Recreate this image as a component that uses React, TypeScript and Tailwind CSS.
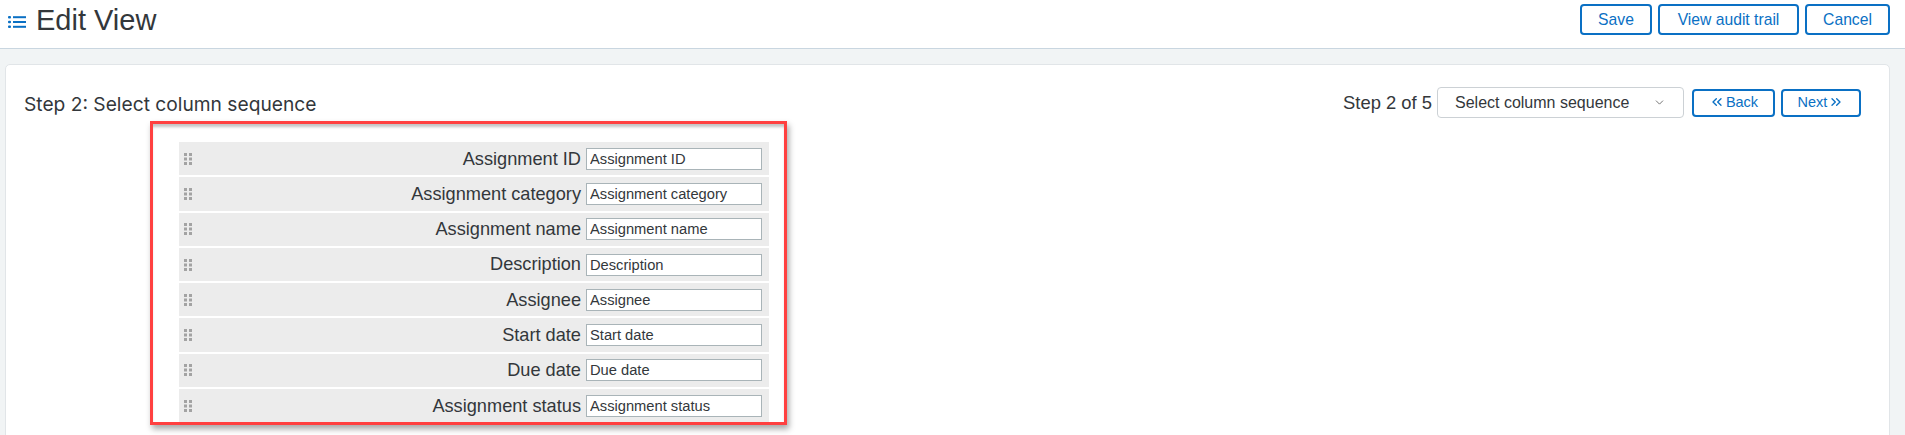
import { ChevronDown, ChevronsLeft, ChevronsRight } from "lucide-react";

const fields = [
  "Assignment ID",
  "Assignment category",
  "Assignment name",
  "Description",
  "Assignee",
  "Start date",
  "Due date",
  "Assignment status",
];

function ListIcon() {
  return (
    <svg width="18" height="14" viewBox="0 0 18 14" className="text-[#0a70c4]">
      <rect x="0" y="1" width="3" height="2.4" rx="1" fill="currentColor" />
      <rect x="0" y="5.8" width="3" height="2.4" rx="1" fill="currentColor" />
      <rect x="0" y="10.6" width="3" height="2.4" rx="1" fill="currentColor" />
      <rect x="5" y="1.2" width="13" height="2" fill="currentColor" />
      <rect x="5" y="6" width="13" height="2" fill="currentColor" />
      <rect x="5" y="10.8" width="13" height="2" fill="currentColor" />
    </svg>
  );
}

function DragHandle() {
  return (
    <svg width="8" height="12" viewBox="0 0 8 12" className="text-[#a3a3a3]">
      {[0, 4.5, 9].map((y) => (
        <g key={y}>
          <rect x="0" y={y} width="3" height="3" fill="currentColor" />
          <rect x="5" y={y} width="3" height="3" fill="currentColor" />
        </g>
      ))}
    </svg>
  );
}

function HeaderButton({ label, width }: { label: string; width: string }) {
  return (
    <button className={`h-[31px] ${width} rounded-[4px] border-2 border-[#0a70c4] bg-white text-[15.7px] text-[#0a70c4]`}>
      {label}
    </button>
  );
}

export default function App() {
  return (
    <div className="h-[435px] overflow-hidden bg-[#f1f4f5] font-['Liberation_Sans',sans-serif] text-[#33373b]">
      {/* Page header */}
      <header className="flex h-[49px] items-center justify-between border-b border-[#c9d6e0] bg-white pl-[8px] pr-[15px]">
        <div className="flex items-center gap-[10px]">
          <div className="-mt-[4px] flex">
            <ListIcon />
          </div>
          <h1 className="-mt-[8px] text-[29px] leading-[40px]">Edit View</h1>
        </div>
        <div className="-mt-[9px] flex items-center gap-[6px]">
          <HeaderButton label="Save" width="w-[72px]" />
          <HeaderButton label="View audit trail" width="w-[141px]" />
          <HeaderButton label="Cancel" width="w-[85px]" />
        </div>
      </header>

      {/* Wizard card */}
      <main className="mx-[5px] mt-[15px] mr-[15px] h-[400px] rounded-t-[5px] border border-[#e1e5e8] bg-white">
        <div className="flex h-[56px] items-start justify-between pl-[18px] pr-[28px] pt-[22px]">
          <h2 className="mt-[5px] font-['Inter',sans-serif] text-[19.2px] leading-[24px]">Step 2: Select column sequence</h2>
          <div className="flex items-center">
            <span className="mr-[5px] text-[18.4px]">Step 2 of 5</span>
            <div className="mr-[8px] flex h-[31px] w-[247px] items-center justify-between rounded-[4px] border border-[#ccd1d5] bg-white pl-[17px] pr-[17px] text-[16px]">
              <span>Select column sequence</span>
              <ChevronDown className="h-[13px] w-[13px] text-[#555]" strokeWidth={1.5} />
            </div>
            <button className="mr-[6px] flex h-[28px] w-[83px] items-center justify-center gap-[1px] rounded-[4px] border-2 border-[#0a70c4] text-[14.5px] text-[#0a70c4]">
              <ChevronsLeft className="-mt-[2px] h-[16px] w-[16px]" strokeWidth={2} />
              Back
            </button>
            <button className="flex h-[28px] w-[80px] items-center justify-center gap-[1px] rounded-[4px] border-2 border-[#0a70c4] text-[14.5px] text-[#0a70c4]">
              Next
              <ChevronsRight className="-mt-[2px] h-[16px] w-[16px]" strokeWidth={2} />
            </button>
          </div>
        </div>

        {/* Highlighted column list */}
        <section className="ml-[144px] w-[637px] border-[3px] border-[#ff4040] bg-white pl-[26px] pr-[15px] pt-[18px] shadow-[inset_0_4px_3px_-1px_#c4c4c4,2px_4px_6px_#a8a8a8]">
          <div className="flex flex-col gap-[2px]">
            {fields.map((field) => (
              <div key={field} className="flex h-[33.3px] items-center bg-[#ececec] pl-[5px] pr-[7px]">
                <DragHandle />
                <label className="flex-1 pt-[1px] pr-[5px] text-right text-[18.2px]">{field}</label>
                <input
                  readOnly
                  value={field}
                  className="h-[22px] w-[176px] border border-[#a9b4b8] bg-white pl-[3px] text-[14.7px] text-[#33373b] outline-none"
                />
              </div>
            ))}
          </div>
        </section>
      </main>
    </div>
  );
}
